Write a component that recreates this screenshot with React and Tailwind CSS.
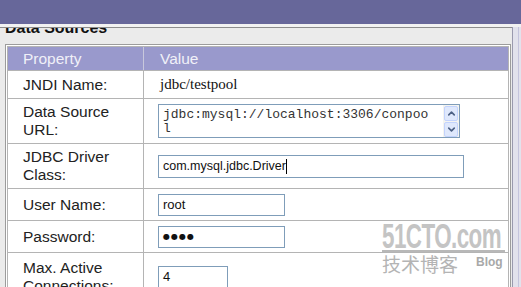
import React from 'react';
import { ChevronUp, ChevronDown } from 'lucide-react';

const rows = [
    { label: ['JNDI Name:'], h: 'h-[28px]', kind: 'text', value: 'jdbc/testpool' },
    { label: ['Data Source', 'URL:'], h: 'h-[45px]', kind: 'area' },
    { label: ['JDBC Driver', 'Class:'], h: 'h-[45px]', kind: 'driver' },
    { label: ['User Name:'], h: 'h-[32px]', kind: 'input', value: 'root' },
    { label: ['Password:'], h: 'h-[32px]', kind: 'password' },
    { label: ['Max. Active', 'Connections:'], h: 'h-[48px]', kind: 'small', value: '4' },
];

const Field = ({ row }) => {
    // champs au look "Windows XP"
    if (row.kind === 'text') {
        return <span className="pl-[16px] text-[15px] text-[#111] font-['Liberation_Serif',serif]">{row.value}</span>;
    }
    if (row.kind === 'area') {
        return (
            <div className="ml-[14px] w-[302px] h-[34px] border border-[#7f9db9] bg-white flex">
                <div className="flex-1 pl-[4px] pt-[3px] text-[13px] leading-[14px] text-[#333] font-['Liberation_Mono',monospace] whitespace-pre">
                    {'jdbc:mysql://localhost:3306/conpoo\nl'}
                </div>
                <div className="w-[16px] flex flex-col bg-[#f4f4f0]">
                    <div className="h-[16px] m-[1px] rounded-[2px] border border-[#c3d3fd] bg-[#dfe8fc] flex items-center justify-center">
                        <ChevronUp size={11} strokeWidth={3.5} className="text-[#4d6185]" />
                    </div>
                    <div className="h-[15px] mx-[1px] rounded-[2px] border border-[#c3d3fd] bg-[#dfe8fc] flex items-center justify-center">
                        <ChevronDown size={11} strokeWidth={3.5} className="text-[#4d6185]" />
                    </div>
                </div>
            </div>
        );
    }
    if (row.kind === 'driver') {
        return (
            <div className="ml-[14px] w-[306px] h-[23px] border border-[#7f9db9] bg-white flex items-center pl-[4px] text-[12.5px] text-[#111] font-['Liberation_Sans',sans-serif]">
                com.mysql.jdbc.Driver<span className="w-[1px] h-[15px] bg-black"></span>
            </div>
        );
    }
    if (row.kind === 'password') {
        return (
            <div className="ml-[14px] w-[127px] h-[22px] border border-[#7f9db9] bg-white flex items-center pl-[4px] text-[8px] tracking-[1px] text-[#111] font-['DejaVu_Sans',sans-serif]">
                ●●●●
            </div>
        );
    }
    const w = row.kind === 'small' ? 'w-[70px]' : 'w-[127px]';
    return (
        <div className={`ml-[14px] ${w} h-[22px] border border-[#7f9db9] bg-white flex items-center pl-[4px] text-[13px] text-[#111] font-['Liberation_Sans',sans-serif]`}>
            {row.value}
        </div>
    );
};

const App = () => {
    return (
        <div className="relative w-[521px] h-[287px] overflow-hidden bg-[#ebebeb] font-['Liberation_Sans',sans-serif]">
            <div className="h-[24px] bg-[#67679a]"></div>
            <div className="h-[3px] bg-[#f2f2f2]"></div>
            <div className="flex">
                <div className="w-[512px] shrink-0">
                    <div className="h-[1px] bg-[#8c8c8c]"></div>
                    <div className="h-[16px] overflow-hidden pl-[5px]">
                        <div className="-mt-[9px] text-[16px] leading-[18px] font-bold text-[#111]">Data Sources</div>
                    </div>
                    <div className="ml-[5px] w-[506px] border border-[#9c9c9c] bg-white p-[1px]">
                        <div className="border-t border-l border-r border-[#b4b4b4]">
                            <div className="flex h-[24px] bg-[#9999cc] border-b border-[#b4b4b4] text-[15.5px] text-[#f0f0f8]">
                                <div className="w-[136px] border-r border-[#c8c8dc] pl-[15px] flex items-center">Property</div>
                                <div className="pl-[16px] flex items-center">Value</div>
                            </div>
                            {rows.map((row, i) => (
                                <div key={i} className={`flex ${row.h} border-b border-[#b4b4b4]`}>
                                    <div className="w-[136px] shrink-0 border-r border-[#b4b4b4] pl-[15px] flex flex-col justify-center text-[15.5px] leading-[18px] text-[#222]">
                                        {row.label.map((l, j) => <span key={j}>{l}</span>)}
                                    </div>
                                    <div className="flex-1 flex items-center">
                                        <Field row={row} />
                                    </div>
                                </div>
                            ))}
                        </div>
                    </div>
                </div>
                <div className="flex-1 h-[260px] border-l border-[#9a9aae] bg-[#e2e2ec] flex">
                    <div className="w-[5px]"></div>
                    <div className="w-[1px] bg-[#c4c4dc]"></div>
                </div>
            </div>

            {/* filigrane 51CTO */}
            <div className="absolute left-[382px] top-[222px] text-[35px] leading-[28px] font-bold text-[#c4c4c4] scale-x-[0.64] origin-left tracking-tight">51CTO.com</div>
            <div className="absolute left-[382px] top-[250px] w-[123px] h-[2px] bg-[#b8b8b8]"></div>
            <div className="absolute left-[382px] top-[254px] text-[19px] leading-none text-[#b4b4b4] font-['Noto_Sans_CJK_SC',sans-serif]">技术博客</div>
            <div className="absolute left-[476px] top-[256px] text-[12px] leading-none font-bold text-[#a8a8a8]">Blog</div>
        </div>
    );
};

export default App;
